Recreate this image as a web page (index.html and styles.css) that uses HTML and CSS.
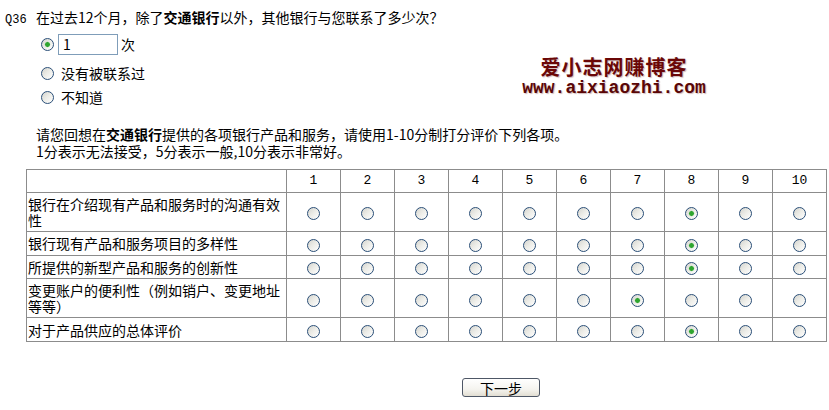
FILE: index.html
```html
<!DOCTYPE html>
<html lang="zh-CN">
<head>
<meta charset="utf-8">
<title>Q36</title>
<link rel="stylesheet" href="styles.css">
</head>
<body>
<div class="page">
  <div class="watermark">
    <div class="wm-cn">爱小志网赚博客</div>
    <div class="wm-url">www.aixiaozhi.com</div>
  </div>

  <div class="question">
    <span class="qno">Q36</span>
    <span class="qtext">在过去12个月，除了<b>交通银行</b>以外，其他银行与您联系了多少次？</span>
  </div>

  <div class="options">
    <label class="opt opt-first">
      <input class="radio" type="radio" name="q36" checked>
      <input class="num" type="text" value="1">
      <span class="unit">次</span>
    </label>
    <label class="opt opt-second">
      <input class="radio" type="radio" name="q36">
      <span class="opt-text">没有被联系过</span>
    </label>
    <label class="opt opt-third">
      <input class="radio" type="radio" name="q36">
      <span class="opt-text">不知道</span>
    </label>
  </div>

  <div class="intro">
    <div class="intro-line">请您回想在<b>交通银行</b>提供的各项银行产品和服务，请使用1-10分制打分评价下列各项。</div>
    <div class="intro-line">1分表示无法接受，5分表示一般,10分表示非常好。</div>
  </div>

  <table class="grid">
    <colgroup>
      <col class="col-label">
      <col class="col-n"><col class="col-n"><col class="col-n"><col class="col-n"><col class="col-n">
      <col class="col-n"><col class="col-n"><col class="col-n"><col class="col-n"><col class="col-n">
    </colgroup>
    <thead>
      <tr>
        <th></th>
        <th>1</th><th>2</th><th>3</th><th>4</th><th>5</th><th>6</th><th>7</th><th>8</th><th>9</th><th>10</th>
      </tr>
    </thead>
    <tbody>
      <tr>
        <td class="label">银行在介绍现有产品和服务时的沟通有效性</td>
        <td><input class="radio" type="radio" name="r1"></td>
        <td><input class="radio" type="radio" name="r1"></td>
        <td><input class="radio" type="radio" name="r1"></td>
        <td><input class="radio" type="radio" name="r1"></td>
        <td><input class="radio" type="radio" name="r1"></td>
        <td><input class="radio" type="radio" name="r1"></td>
        <td><input class="radio" type="radio" name="r1"></td>
        <td><input class="radio" type="radio" name="r1" checked></td>
        <td><input class="radio" type="radio" name="r1"></td>
        <td><input class="radio" type="radio" name="r1"></td>
      </tr>
      <tr>
        <td class="label">银行现有产品和服务项目的多样性</td>
        <td><input class="radio" type="radio" name="r2"></td>
        <td><input class="radio" type="radio" name="r2"></td>
        <td><input class="radio" type="radio" name="r2"></td>
        <td><input class="radio" type="radio" name="r2"></td>
        <td><input class="radio" type="radio" name="r2"></td>
        <td><input class="radio" type="radio" name="r2"></td>
        <td><input class="radio" type="radio" name="r2"></td>
        <td><input class="radio" type="radio" name="r2" checked></td>
        <td><input class="radio" type="radio" name="r2"></td>
        <td><input class="radio" type="radio" name="r2"></td>
      </tr>
      <tr>
        <td class="label">所提供的新型产品和服务的创新性</td>
        <td><input class="radio" type="radio" name="r3"></td>
        <td><input class="radio" type="radio" name="r3"></td>
        <td><input class="radio" type="radio" name="r3"></td>
        <td><input class="radio" type="radio" name="r3"></td>
        <td><input class="radio" type="radio" name="r3"></td>
        <td><input class="radio" type="radio" name="r3"></td>
        <td><input class="radio" type="radio" name="r3"></td>
        <td><input class="radio" type="radio" name="r3" checked></td>
        <td><input class="radio" type="radio" name="r3"></td>
        <td><input class="radio" type="radio" name="r3"></td>
      </tr>
      <tr>
        <td class="label">变更账户的便利性（例如销户、变更地址等等）</td>
        <td><input class="radio" type="radio" name="r4"></td>
        <td><input class="radio" type="radio" name="r4"></td>
        <td><input class="radio" type="radio" name="r4"></td>
        <td><input class="radio" type="radio" name="r4"></td>
        <td><input class="radio" type="radio" name="r4"></td>
        <td><input class="radio" type="radio" name="r4"></td>
        <td><input class="radio" type="radio" name="r4" checked></td>
        <td><input class="radio" type="radio" name="r4"></td>
        <td><input class="radio" type="radio" name="r4"></td>
        <td><input class="radio" type="radio" name="r4"></td>
      </tr>
      <tr>
        <td class="label">对于产品供应的总体评价</td>
        <td><input class="radio" type="radio" name="r5"></td>
        <td><input class="radio" type="radio" name="r5"></td>
        <td><input class="radio" type="radio" name="r5"></td>
        <td><input class="radio" type="radio" name="r5"></td>
        <td><input class="radio" type="radio" name="r5"></td>
        <td><input class="radio" type="radio" name="r5"></td>
        <td><input class="radio" type="radio" name="r5"></td>
        <td><input class="radio" type="radio" name="r5" checked></td>
        <td><input class="radio" type="radio" name="r5"></td>
        <td><input class="radio" type="radio" name="r5"></td>
      </tr>
    </tbody>
  </table>

  <div class="actions">
    <button class="next" type="button">下一步</button>
  </div>
</div>
</body>
</html>
```

FILE: styles.css
```css
html, body {
  margin: 0;
  padding: 0;
  background: #ffffff;
}

body {
  font-family: "Noto Sans CJK SC", "Noto Sans", sans-serif;
  font-size: 14px;
  line-height: 16px;
  color: #000000;
}

.page {
  position: relative;
  width: 829px;
  padding-top: 9px;
}

/* watermark overlay */
.watermark {
  position: absolute;
  left: 517px;
  top: 55px;
  width: 194px;
  text-align: center;
  color: #6a0707;
  text-shadow: 1px 1px 1px rgba(120, 60, 60, 0.35);
}

.wm-cn {
  font-family: "Noto Sans CJK SC", serif;
  font-weight: 700;
  font-size: 20px;
  line-height: 23px;
  height: 23px;
  letter-spacing: 1px;
}

.wm-url {
  font-family: "Liberation Mono", monospace;
  font-weight: 700;
  font-size: 18px;
  line-height: 20px;
  height: 20px;
  color: #5a0606;
}

/* question line */
.question {
  display: flex;
  align-items: baseline;
  padding-left: 5px;
  height: 16px;
}

.qno {
  font-family: "Liberation Mono", monospace;
  font-size: 12px;
  width: 31px;
}

.qtext b,
.intro b {
  display: inline-block;
  height: 16px;
  font-weight: 700;
  overflow: visible;
}

/* options */
.options {
  padding-left: 41px;
}

.opt {
  display: flex;
  align-items: center;
}

.opt-first {
  margin-top: 8px;
  height: 22px;
}

.opt-second {
  margin-top: 10px;
  height: 16px;
}

.opt-third {
  margin-top: 8px;
  height: 16px;
}

.opt-text {
  margin-left: 7px;
}

.num {
  box-sizing: border-box;
  width: 60px;
  height: 21px;
  margin: 0 0 0 4px;
  padding: 0 4px;
  border: 1px solid #7f9db9;
  font-family: "Noto Sans CJK SC", sans-serif;
  font-size: 14px;
  color: #000;
  background: #fff;
}

.unit {
  margin-left: 3px;
}

/* radio */
.radio {
  -webkit-appearance: none;
  appearance: none;
  box-sizing: border-box;
  width: 13px;
  height: 13px;
  margin: 0;
  border: 1px solid #2b4f78;
  border-radius: 50%;
  background: linear-gradient(135deg, #d4d4ce 0%, #ebebe6 45%, #ffffff 100%);
  vertical-align: middle;
}

.radio:checked {
  background:
    radial-gradient(circle, #2fa52f 0, #2fa52f 2px, rgba(47, 165, 47, 0.3) 2.6px, transparent 3.2px),
    linear-gradient(135deg, #d4d4ce 0%, #ebebe6 45%, #ffffff 100%);
}

/* intro paragraph */
.intro {
  margin: 21px 0 0 36px;
}

.intro-line {
  height: 17px;
  line-height: 17px;
}

/* rating grid */
.grid {
  margin: 9px 0 0 26px;
  border-collapse: collapse;
  table-layout: fixed;
  width: 801px;
  border: 1px solid #4a4a4a;
}

.col-label {
  width: 260px;
}

.col-n {
  width: 54px;
}

.grid th,
.grid td {
  border: 1px solid #8c8c8c;
  padding: 3px 2px;
  height: 16px;
  line-height: 16px;
  text-align: center;
  vertical-align: middle;
}

.grid th {
  font-weight: 400;
  font-family: "Liberation Mono", "Noto Sans CJK SC", monospace;
  font-size: 13px;
}

.grid td.label {
  text-align: left;
  padding: 3px 1px;
}

/* actions */
.actions {
  padding: 36px 0 0 462px;
}

.next {
  box-sizing: border-box;
  width: 78px;
  height: 19px;
  padding: 0;
  border: 1px solid #4e5766;
  border-radius: 3px;
  background: linear-gradient(180deg, #ffffff 0%, #f5f4ef 60%, #e2ded2 100%);
  font-family: "Noto Sans CJK SC", sans-serif;
  font-size: 14px;
  line-height: 16px;
  color: #000;
}
```
